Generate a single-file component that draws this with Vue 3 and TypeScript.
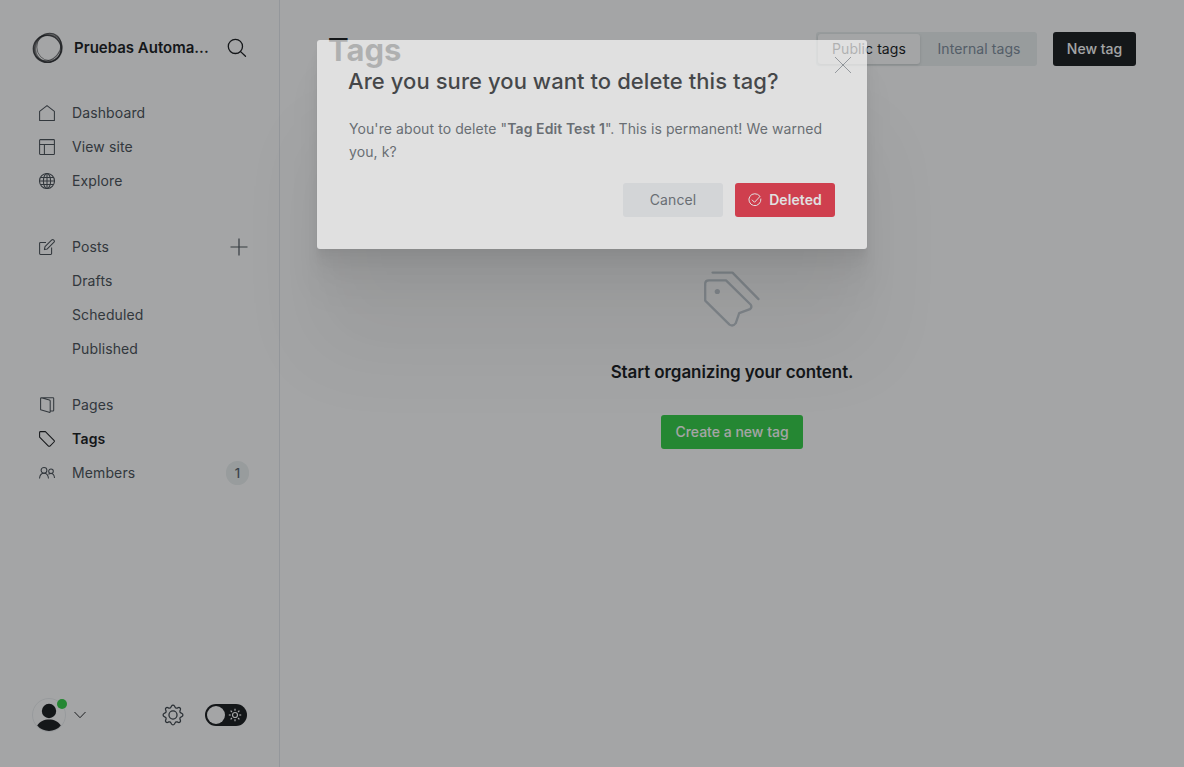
<script setup lang="ts">
import { ref } from 'vue'

interface NavItem {
  label: string
  icon?: string
  active?: boolean
  plus?: boolean
  count?: number
}

const groups: NavItem[][] = [
  [
    { label: 'Dashboard', icon: 'home' },
    { label: 'View site', icon: 'layout' },
    { label: 'Explore', icon: 'globe' },
  ],
  [
    { label: 'Posts', icon: 'edit', plus: true },
    { label: 'Drafts' },
    { label: 'Scheduled' },
    { label: 'Published' },
  ],
  [
    { label: 'Pages', icon: 'pages' },
    { label: 'Tags', icon: 'tag', active: true },
    { label: 'Members', icon: 'members', count: 1 },
  ],
]

const tagType = ref<'public' | 'internal'>('public')
const rays = [0, 45, 90, 135, 180, 225, 270, 315]
</script>

<template>
  <div class="app">
    <aside class="sidebar">
      <header class="site">
        <svg class="logo" viewBox="0 0 32 32" fill="none" stroke="#15171a">
          <ellipse cx="15.3" cy="16.8" rx="13.9" ry="13.5" stroke-width="1.5" opacity=".8" />
          <ellipse cx="16.6" cy="15.2" rx="14.6" ry="12.4" stroke-width="1.1" opacity=".6" transform="rotate(-52 16 16)" />
          <ellipse cx="16.8" cy="16" rx="13.2" ry="13.8" stroke-width="1.4" opacity=".5" transform="rotate(25 16 16)" />
          <ellipse cx="17.4" cy="15" rx="12.6" ry="13.6" stroke-width="1" opacity=".5" />
        </svg>
        <span class="site-name">Pruebas Automa...</span>
        <svg class="search" viewBox="0 0 20 20" fill="none" stroke="#15171a" stroke-width="1.3" stroke-linecap="round">
          <circle cx="8.4" cy="8.4" r="7.1" />
          <path d="M13.6 13.6 18.5 18.2" />
        </svg>
      </header>

      <nav>
        <ul v-for="(group, g) in groups" :key="g" class="group">
          <li v-for="item in group" :key="item.label" class="item" :class="{ active: item.active }">
            <span class="icon">
              <svg v-if="item.icon === 'home'" viewBox="0 0 16 16"><path d="M.6 6.3V15.4H15.4V6.3L8 .6Z" /></svg>
              <svg v-else-if="item.icon === 'layout'" viewBox="0 0 16 16"><rect x=".6" y=".6" width="14.8" height="14.8" rx=".7" /><path d="M.6 5.4H15.4M5.4 5.4V15.4" /></svg>
              <svg v-else-if="item.icon === 'globe'" viewBox="0 0 16 16"><circle cx="8" cy="8" r="7.5" /><ellipse cx="8" cy="8" rx="3.6" ry="7.5" /><path d="M8 .5V15.5M.5 8H15.5M1.5 4.5H14.5M1.5 11.5H14.5" /></svg>
              <svg v-else-if="item.icon === 'edit'" viewBox="0 0 16 16"><path d="M7 3.4H1.5a.9.9 0 0 0-.9.9V14.5a.9.9 0 0 0 .9.9H11.7a.9.9 0 0 0 .9-.9V8.5M6 7.6 12.8.9Q13.8.2 14.8 1.1 15.9 2.1 15 3.2L8.3 9.9 5.4 10.6Z" /></svg>
              <svg v-else-if="item.icon === 'pages'" viewBox="0 0 16 16"><path d="M2.3.7H14a.7.7 0 0 1 .7.7V13.3a.7.7 0 0 1-.7.7H11.5M2.3.7Q1.6.7 1.6 1.5V12.7L10.2 15.3Q11.2 15.6 11.2 14.6V4.1Q11.2 3.3 10.4 3L2.3.7" /></svg>
              <svg v-else-if="item.icon === 'tag'" viewBox="0 0 16 16"><path d="M.6 1.5V6.2L9.2 14.8Q10.2 15.8 11.2 14.8L15 11Q15.7 10.2 15 9.4L6.4.6H1.5Q.6.6.6 1.5Z" /></svg>
              <svg v-else-if="item.icon === 'members'" viewBox="0 0 16 16"><circle cx="5" cy="5.3" r="2.9" /><circle cx="12" cy="6.2" r="2.3" /><path d="M.5 13.5C.8 10.1 2.5 8.3 5 8.3S9.2 10.1 9.5 13.5M9.4 9.2Q10.4 8.5 12 8.5C14 8.5 15.3 10.3 15.5 13" /></svg>
            </span>
            <span class="label">{{ item.label }}</span>
            <svg v-if="item.plus" class="plus" viewBox="0 0 18 18"><path d="M9 .5V17.5M.5 9H17.5" /></svg>
            <span v-if="item.count" class="count">{{ item.count }}</span>
          </li>
        </ul>
      </nav>

      <footer class="account">
        <div class="avatar">
          <svg viewBox="0 0 34 34">
            <circle cx="17" cy="17" r="16.5" fill="none" stroke="#ebeef0" />
            <circle cx="17" cy="13" r="7.2" fill="#15171a" />
            <path d="M5.2 27.6C8 23.4 12 21.6 17 21.6S26 23.4 28.8 27.6C25.8 31.3 21.5 33 17 33S8.2 31.3 5.2 27.6Z" fill="#15171a" />
          </svg>
          <i class="dot"></i>
        </div>
        <svg class="chevron" viewBox="0 0 12 8" fill="none" stroke="#15171a" stroke-width=".95"><path d="M.5 1 6 6.7 11.5 1" /></svg>
        <svg class="gear" viewBox="0 0 24 24" fill="none" stroke="#394047" stroke-width="1.4" stroke-linejoin="round">
          <circle cx="12" cy="12" r="4.4" />
          <path d="M10.4 2.2a1.9 1.9 0 0 1 3.2 0l.7 1.3a1.8 1.8 0 0 0 2.3.9l1.2-.5a1.8 1.8 0 0 1 2.3 2.3l-.5 1.2a1.8 1.8 0 0 0 .9 2.3l1.3.7a1.8 1.8 0 0 1 0 3.2l-1.3.7a1.8 1.8 0 0 0-.9 2.3l.5 1.2a1.8 1.8 0 0 1-2.3 2.3l-1.2-.5a1.8 1.8 0 0 0-2.3.9l-.7 1.3a1.9 1.9 0 0 1-3.2 0l-.7-1.3a1.8 1.8 0 0 0-2.3-.9l-1.2.5a1.8 1.8 0 0 1-2.3-2.3l.5-1.2a1.8 1.8 0 0 0-.9-2.3l-1.3-.7a1.8 1.8 0 0 1 0-3.2l1.3-.7a1.8 1.8 0 0 0 .9-2.3l-.5-1.2a1.8 1.8 0 0 1 2.3-2.3l1.2.5a1.8 1.8 0 0 0 2.3-.9Z" />
        </svg>
        <div class="toggle">
          <i class="knob"></i>
          <svg viewBox="0 0 14 14" fill="none" stroke="#fff" stroke-width="1.2">
            <circle cx="7" cy="7" r="2.5" />
            <path v-for="r in rays" :key="r" d="M7 .8V2.7" :transform="`rotate(${r} 7 7)`" />
          </svg>
        </div>
      </footer>
    </aside>

    <main class="main">
      <header class="top">
        <h1>Tags</h1>
        <div class="tabs">
          <button :class="{ on: tagType === 'public' }" @click="tagType = 'public'">Public tags</button>
          <button :class="{ on: tagType === 'internal' }" @click="tagType = 'internal'">Internal tags</button>
        </div>
        <button class="new">New tag</button>
      </header>
      <section class="empty">
        <svg viewBox="0 0 58 60" fill="none" stroke="#c3cbd2" stroke-width="2.3" stroke-linecap="round" stroke-linejoin="round">
          <path d="M9.5 3.6H29.5L55.5 30.1M6 11.4H23L47.8 35.8Q49.3 38.1 47 40.2L36.2 44.1 32.8 54.1Q30 57.9 26.5 55.6L2.2 31.6V14.6Q2.2 11.4 6 11.4Z" />
          <circle cx="14.3" cy="22.5" r="2.6" fill="#c3cbd2" stroke="none" />
        </svg>
        <h4>Start organizing your content.</h4>
        <button class="create">Create a new tag</button>
      </section>
    </main>

    <div class="backdrop"></div>
    <div class="modal-wrap">
      <div class="modal" role="dialog">
        <svg class="close" viewBox="0 0 16 16" fill="none" stroke="#5d666e" stroke-width=".7"><path d="M0 0 16 16M16 0 0 16" /></svg>
        <h2>Are you sure you want to delete this tag?</h2>
        <p>You're about to delete "<strong>Tag Edit Test 1</strong>". This is permanent! We warned you, k?</p>
        <div class="actions">
          <button class="cancel">Cancel</button>
          <button class="deleted">
            <svg viewBox="0 0 14 14" fill="none" stroke="#fff" stroke-width="1" stroke-linecap="round" stroke-linejoin="round">
              <path d="M11.7 3A6 6 0 1 0 12.9 6M4.2 7 6.5 9.3 12 3.4" />
            </svg>
            Deleted
          </button>
        </div>
      </div>
    </div>
  </div>
</template>

<style>
body {
  overflow: hidden;
}
</style>

<style scoped>
* {
  box-sizing: border-box;
}
.app {
  position: relative;
  display: flex;
  width: 100%;
  height: 100vh;
  background: #fff;
  color: #15171a;
  font: 400 14px/1.6 Inter, "Liberation Sans", sans-serif;
}
h1, h2, h4, p, ul {
  margin: 0;
  padding: 0;
}
button {
  display: flex;
  align-items: center;
  justify-content: center;
  height: 34px;
  padding: 0;
  border: 0;
  border-radius: 3px;
  font: inherit;
  letter-spacing: .08px;
}
.sidebar {
  display: flex;
  flex-direction: column;
  flex: 0 0 280px;
  border-right: 1px solid #e5e9ed;
}
.site {
  display: flex;
  align-items: center;
  height: 32px;
  margin: 32px 32px 32px;
}
.logo {
  width: 32px;
  height: 32px;
}
.site-name {
  flex: 1;
  margin-left: 10px;
  font-size: 15px;
  font-weight: 600;
  white-space: nowrap;
}
.search {
  width: 20px;
  height: 20px;
}
.group {
  margin-bottom: 32px;
  list-style: none;
}
.group:nth-child(2) {
  margin-bottom: 22px;
}
.item {
  display: flex;
  align-items: center;
  height: 34px;
  padding: 0 30px 0 39px;
  color: #464d54;
  letter-spacing: .12px;
}
.item.active {
  color: #15171a;
  font-weight: 600;
  letter-spacing: .2px;
}
.icon {
  display: flex;
  width: 33px;
}
.icon svg {
  width: 16px;
  height: 16px;
  fill: none;
  stroke: currentColor;
  stroke-width: 1.05;
  stroke-linejoin: round;
}
.label {
  flex: 1;
}
.plus {
  width: 18px;
  height: 18px;
  margin-right: 1px;
  fill: none;
  stroke: #4a5259;
  stroke-width: 1.2;
}
.count {
  width: 23px;
  height: 24px;
  border-radius: 12px;
  background: #ebf0f0;
  color: #54616b;
  font-size: 13px;
  font-weight: 500;
  line-height: 24px;
  text-align: center;
}
.account {
  display: flex;
  align-items: center;
  height: 34px;
  margin: auto 32px 35px;
}
.avatar {
  position: relative;
  width: 34px;
  height: 34px;
}
.avatar svg {
  display: block;
}
.dot {
  position: absolute;
  top: 1px;
  right: -1px;
  width: 10px;
  height: 10px;
  border-radius: 50%;
  background: #30cf43;
}
.chevron {
  width: 12px;
  height: 8px;
  margin-left: 8px;
}
.gear {
  width: 22px;
  height: 22px;
  margin-left: auto;
}
.toggle {
  display: flex;
  align-items: center;
  justify-content: space-between;
  width: 42px;
  height: 22px;
  margin-left: 21px;
  padding: 0 5px 0 2px;
  border-radius: 11px;
  background: #15171a;
}
.knob {
  width: 18px;
  height: 18px;
  border-radius: 50%;
  background: #fff;
}
.toggle svg {
  width: 14px;
  height: 14px;
}
.main {
  display: flex;
  flex: 1;
  flex-direction: column;
  padding: 32px 48px;
}
.top {
  display: flex;
  align-items: center;
  height: 34px;
}
h1 {
  flex: 1;
  margin-top: 2px;
  font-size: 31px;
  font-weight: 700;
  line-height: 34px;
}
.tabs {
  display: flex;
  width: 221px;
  height: 34px;
  margin-right: 16px;
  padding: 2px;
  border-radius: 3px;
  background: #ebf0f0;
}
.tabs button {
  flex: 1 1 115px;
  height: 30px;
  padding-left: 3px;
  background: transparent;
  color: #7c8b9a;
}
.tabs button.on {
  flex: 0 0 102px;
  padding-left: 0;
  background: #fff;
  box-shadow: 0 1px 3px rgba(0, 0, 0, .15);
  color: #15171a;
}
.new {
  width: 83px;
  background: #15171a;
  color: #fff;
  font-weight: 500;
  letter-spacing: 0;
}
.empty {
  display: flex;
  flex-direction: column;
  align-items: center;
  margin-top: 203px;
}
.empty svg {
  width: 58px;
  height: 60px;
}
h4 {
  margin-top: 29px;
  font-size: 17px;
  font-weight: 600;
  letter-spacing: -.09px;
  line-height: 28px;
}
.create {
  width: 142px;
  margin-top: 29px;
  background: #30cf43;
  color: #fff;
  font-weight: 500;
  letter-spacing: 0;
}
.backdrop {
  position: absolute;
  inset: 0;
  background: rgba(21, 23, 26, .39);
}
.modal-wrap {
  position: absolute;
  inset: 0;
  display: flex;
  align-items: flex-start;
  justify-content: center;
  padding-top: 40px;
}
.modal {
  position: relative;
  width: 550px;
  height: 209px;
  padding: 27px 32px 32px;
  border-radius: 3px;
  background: #fff;
  box-shadow:
    0 2.8px 2.2px rgba(0, 0, 0, .02),
    0 6.7px 5.3px rgba(0, 0, 0, .028),
    0 12.5px 10px rgba(0, 0, 0, .035),
    0 22.3px 17.9px rgba(0, 0, 0, .042),
    0 41.8px 33.4px rgba(0, 0, 0, .05),
    0 100px 80px rgba(0, 0, 0, .08);
  opacity: .66;
}
.close {
  position: absolute;
  top: 17px;
  right: 16px;
  width: 16px;
  height: 16px;
}
h2 {
  margin-left: -1px;
  font-size: 22px;
  font-weight: 500;
  letter-spacing: .07px;
  line-height: 29px;
}
.modal p {
  margin-top: 21px;
  color: #4b5259;
  letter-spacing: .085px;
  line-height: 23px;
}
.modal strong {
  font-weight: 600;
}
.actions {
  display: flex;
  justify-content: flex-end;
  gap: 12px;
  margin-top: 20px;
}
.actions button {
  width: 100px;
}
.cancel {
  background: #eceef1;
  color: #4b5259;
}
.deleted {
  background: #e60b21;
  color: #fff;
  font-weight: 600;
}
.deleted svg {
  width: 14px;
  height: 14px;
  margin-right: 7px;
}
</style>
